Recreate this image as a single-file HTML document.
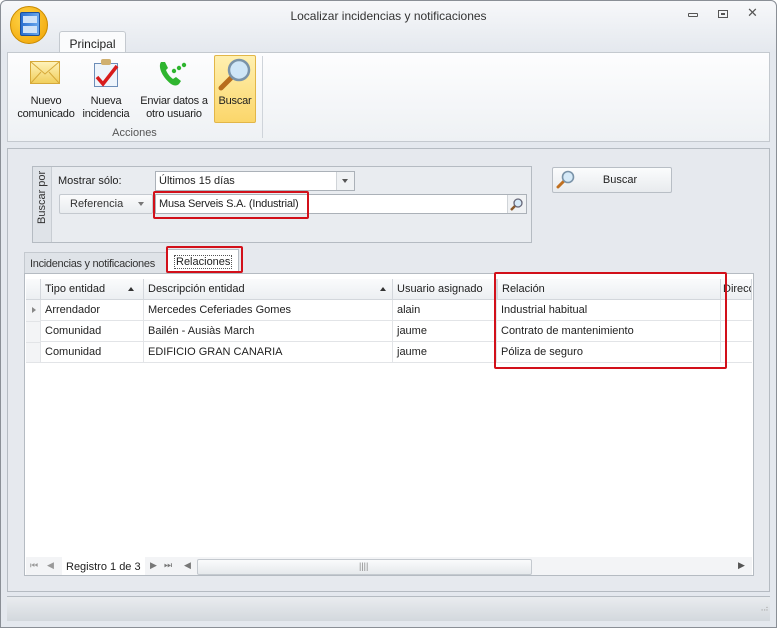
<!DOCTYPE html>
<html><head><meta charset="utf-8"><style>
*{box-sizing:border-box;margin:0;padding:0}
body{width:777px;height:628px;overflow:hidden;background:#fff;font-family:"Liberation Sans",sans-serif;font-size:11px;color:#1e1e1e;position:relative}
.a{position:absolute}
.win{left:0;top:0;width:777px;height:628px;background:#e4e8ee;border:1px solid #8a8f96;border-radius:6px 6px 0 0}
.t{white-space:nowrap}
.hdr{background:linear-gradient(#fafbfc,#eceff2);border-right:1px solid #d3d7dc;border-bottom:1px solid #d3d7dc;height:21px;top:279px;line-height:21px;padding-left:4px}
.cell{height:21px;line-height:21px;padding-left:4px;border-right:1px solid #e2e4e7;border-bottom:1px solid #e2e4e7;background:#fff}
.red{border:2px solid #d2101a;border-radius:2px}
.rl{line-height:13px;font-size:11px;letter-spacing:-0.2px;text-align:center}
</style></head><body>
<div class="a win"></div>
<div class="a" style="left:1px;top:1px;width:775px;height:52px;background:linear-gradient(#f7f8fa,#e4e8ee);border-radius:6px 6px 0 0"></div>
<div class="a t" style="left:0;width:777px;top:9px;text-align:center;font-size:12px;color:#333">Localizar incidencias y notificaciones</div>
<div class="a" style="left:10px;top:6px;width:38px;height:38px;border-radius:50%;background:radial-gradient(circle at 40% 35%,#ffd64a,#f0a000);border:1px solid #c88a00"></div>
<div class="a" style="left:20px;top:12px;width:20px;height:24px;background:linear-gradient(90deg,#2a6fd0,#6aa8ee);border:1px solid #1d4f9a;border-radius:2px"></div>
<div class="a" style="left:23px;top:16px;width:14px;height:7px;background:#cfe2f8"></div>
<div class="a" style="left:23px;top:26px;width:14px;height:7px;background:#cfe2f8"></div>
<div class="a" style="left:688px;top:13px;width:10px;height:4px;border:1px solid #555;border-radius:1px"></div>
<div class="a" style="left:718px;top:10px;width:10px;height:8px;border:1px solid #555"></div>
<div class="a" style="left:721px;top:13px;width:4px;height:2px;border:1px solid #555"></div>
<div class="a t" style="left:747px;top:5px;font-size:13px;color:#555">✕</div>
<div class="a" style="left:59px;top:31px;width:67px;height:23px;background:#fafbfc;border:1px solid #c4c9cf;border-bottom:none;border-radius:3px 3px 0 0"></div>
<div class="a t" style="left:59px;width:67px;top:37px;text-align:center;font-size:12px">Principal</div>
<div class="a" style="left:7px;top:52px;width:763px;height:90px;background:linear-gradient(#fdfdfe,#eef1f4);border:1px solid #c4c9cf"></div>
<div class="a" style="left:262px;top:56px;width:1px;height:82px;background:#cfd4da"></div>
<div class="a" style="left:30px;top:61px;width:30px;height:23px;background:linear-gradient(#fff2b8,#f1cf5e);border:1px solid #d6a93a"></div>
<svg class="a" style="left:30px;top:61px" width="30" height="23"><path d="M1 1L15 13L29 1M1 22L11 11M29 22L19 11" stroke="#d6a93a" fill="none"/></svg>
<div class="a" style="left:94px;top:63px;width:24px;height:24px;background:#eef4fb;border:1px solid #6c8db8"></div>
<div class="a" style="left:101px;top:59px;width:10px;height:6px;background:#d0b070;border-radius:2px"></div>
<svg class="a" style="left:92px;top:63px" width="30" height="26"><path d="M5 14L11 21L25 3" stroke="#d81b1b" stroke-width="3.5" fill="none"/></svg>
<svg class="a" style="left:155px;top:56px" width="34" height="34"><path d="M6 6c-3 4 0 14 10 22 3 2 6 2 8 0l2-3-5-4-3 2c-3-2-6-6-7-9l2-2-3-6z" fill="#2fb52f"/><circle cx="19" cy="15" r="2.2" fill="#2fb52f"/><circle cx="24" cy="12" r="2.2" fill="#2fb52f"/><circle cx="29" cy="9" r="2.2" fill="#2fb52f"/></svg>
<div class="a" style="left:214px;top:55px;width:42px;height:68px;background:linear-gradient(#fff0b0,#fbd66a);border:1px solid #e2b648;border-radius:2px"></div>
<svg class="a" style="left:217px;top:57px" width="36" height="34"><path d="M4 31L14 21" stroke="#b86d1c" stroke-width="5" stroke-linecap="round"/><circle cx="22" cy="13" r="10" fill="#cfe6f7" stroke="#7a93a8" stroke-width="2.5"/></svg>
<div class="a t rl" style="left:14px;width:64px;top:95px">Nuevo<br>comunicado</div>
<div class="a t rl" style="left:80px;width:52px;top:95px">Nueva<br>incidencia</div>
<div class="a t rl" style="left:136px;width:76px;top:95px">Enviar datos a<br>otro usuario</div>
<div class="a t rl" style="left:214px;width:42px;top:95px">Buscar</div>
<div class="a t" style="left:7px;width:255px;top:127px;text-align:center;color:#555;font-size:11px">Acciones</div>
<div class="a" style="left:7px;top:148px;width:763px;height:444px;border:1px solid #b5bbc2;background:#e6e9ee"></div>
<div class="a" style="left:32px;top:166px;width:500px;height:77px;border:1px solid #b5bbc2;background:#e9ecf0"></div>
<div class="a" style="left:33px;top:167px;width:19px;height:75px;background:#dfe3e8;border-right:1px solid #c8cdd3"></div>
<div class="a t" style="left:20px;top:196px;transform:rotate(-90deg);width:44px;text-align:center;color:#333">Buscar por</div>
<div class="a t" style="left:58px;top:175px;font-size:11px">Mostrar sólo:</div>
<div class="a" style="left:155px;top:171px;width:200px;height:20px;background:#fff;border:1px solid #abb1b8"></div>
<div class="a t" style="left:159px;top:175px;font-size:11px">Últimos 15 días</div>
<div class="a" style="left:336px;top:172px;width:18px;height:18px;background:#f0f2f4;border-left:1px solid #d0d4d8"></div>
<div class="a" style="left:342px;top:179px;border:3.5px solid transparent;border-top:4px solid #555"></div>
<div class="a" style="left:59px;top:194px;width:94px;height:20px;background:linear-gradient(#fbfbfc,#e9ecef);border:1px solid #c4c9cf;border-radius:2px"></div>
<div class="a t" style="left:70px;top:198px;font-size:11px;color:#333">Referencia</div>
<div class="a" style="left:138px;top:202px;border:3.5px solid transparent;border-top:4px solid #777"></div>
<div class="a" style="left:155px;top:194px;width:372px;height:20px;background:#fff;border:1px solid #abb1b8"></div>
<div class="a t" style="left:159px;top:198px;font-size:11px;letter-spacing:-0.2px">Musa Serveis S.A. (Industrial)</div>
<div class="a" style="left:507px;top:195px;width:19px;height:18px;background:#f0f2f4;border-left:1px solid #d0d4d8"></div>
<svg class="a" style="left:509px;top:197px" width="15" height="14"><path d="M2 13L6 9" stroke="#8a5a2a" stroke-width="2.5"/><circle cx="9" cy="6" r="4" fill="#d6eaf8" stroke="#667" stroke-width="1.3"/></svg>
<div class="a red" style="left:153px;top:191px;width:156px;height:28px"></div>
<div class="a" style="left:552px;top:167px;width:120px;height:26px;background:linear-gradient(#fbfcfd,#e8ebee);border:1px solid #b8bec5;border-radius:2px"></div>
<svg class="a" style="left:556px;top:170px" width="20" height="19"><path d="M2 17L8 11" stroke="#c07020" stroke-width="3" stroke-linecap="round"/><circle cx="12" cy="7" r="5.5" fill="#d6eaf8" stroke="#7a93a8" stroke-width="1.6"/></svg>
<div class="a t" style="left:552px;width:136px;top:174px;text-align:center;font-size:11px">Buscar</div>
<div class="a" style="left:24px;top:252px;width:143px;height:21px;background:#dfe3e8;border:1px solid #c4c9cf;border-bottom:none"></div>
<div class="a t" style="left:30px;top:258px;font-size:11px;letter-spacing:-0.3px;color:#333">Incidencias y notificaciones</div>
<div class="a" style="left:167px;top:249px;width:72px;height:25px;background:#fff;border:1px solid #b5bbc2;border-bottom:none"></div>
<div class="a t" style="left:175px;top:256px;font-size:11px;outline:1px dotted #555;padding:0 1px">Relaciones</div>
<div class="a red" style="left:166px;top:246px;width:77px;height:27px"></div>
<div class="a" style="left:24px;top:273px;width:730px;height:303px;background:#fff;border:1px solid #b5bbc2"></div>
<div class="a" style="left:26px;top:279px;width:726px;height:1px;background:#d3d7dc"></div>
<div class="a hdr" style="left:26px;width:15px"></div>
<div class="a hdr t" style="left:41px;width:103px">Tipo entidad</div>
<div class="a" style="left:128px;top:287px;border:3.5px solid transparent;border-bottom:4px solid #333;border-top:none"></div>
<div class="a hdr t" style="left:144px;width:249px">Descripción entidad</div>
<div class="a" style="left:380px;top:287px;border:3.5px solid transparent;border-bottom:4px solid #333;border-top:none"></div>
<div class="a hdr t" style="left:393px;width:104px">Usuario asignado</div>
<div class="a hdr t" style="left:497px;width:224px;border-left:1px solid #d3d7dc">Relación</div>
<div class="a hdr t" style="left:721px;width:31px;overflow:hidden;padding-left:2px">Direcc</div>
<div class="a" style="left:26px;top:300px;width:15px;height:63px;background:#f3f4f6;border-right:1px solid #e2e4e7"></div>
<div class="a" style="left:26px;top:321px;width:15px;height:1px;background:#e2e4e7"></div>
<div class="a" style="left:26px;top:342px;width:15px;height:1px;background:#e2e4e7"></div>
<div class="a" style="left:26px;top:362px;width:15px;height:1px;background:#e2e4e7"></div>
<div class="a" style="left:32px;top:307px;border:3px solid transparent;border-left:4px solid #888;border-right:none"></div>
<div class="a cell t" style="left:41px;top:300px;width:103px">Arrendador</div>
<div class="a cell t" style="left:144px;top:300px;width:249px">Mercedes Ceferiades Gomes</div>
<div class="a cell t" style="left:393px;top:300px;width:104px">alain</div>
<div class="a cell t" style="left:497px;top:300px;width:224px">Industrial habitual</div>
<div class="a cell" style="left:721px;top:300px;width:31px;border-right:none"></div>
<div class="a cell t" style="left:41px;top:321px;width:103px">Comunidad</div>
<div class="a cell t" style="left:144px;top:321px;width:249px">Bailén - Ausiàs March</div>
<div class="a cell t" style="left:393px;top:321px;width:104px">jaume</div>
<div class="a cell t" style="left:497px;top:321px;width:224px">Contrato de mantenimiento</div>
<div class="a cell" style="left:721px;top:321px;width:31px;border-right:none"></div>
<div class="a cell t" style="left:41px;top:342px;width:103px">Comunidad</div>
<div class="a cell t" style="left:144px;top:342px;width:249px">EDIFICIO GRAN CANARIA</div>
<div class="a cell t" style="left:393px;top:342px;width:104px">jaume</div>
<div class="a cell t" style="left:497px;top:342px;width:224px">Póliza de seguro</div>
<div class="a cell" style="left:721px;top:342px;width:31px;border-right:none"></div>
<div class="a red" style="left:494px;top:272px;width:233px;height:97px"></div>
<div class="a" style="left:26px;top:557px;width:726px;height:18px;background:#f3f4f6"></div>
<div class="a t" style="left:30px;top:560px;font-size:9px;color:#999">⏮</div>
<div class="a t" style="left:47px;top:560px;font-size:9px;color:#999">◀</div>
<div class="a" style="left:62px;top:557px;width:83px;height:18px;background:#fff"></div>
<div class="a t" style="left:66px;top:561px;font-size:11px">Registro 1 de 3</div>
<div class="a t" style="left:150px;top:560px;font-size:9px;color:#777">▶</div>
<div class="a t" style="left:164px;top:560px;font-size:9px;color:#777">⏭</div>
<div class="a t" style="left:184px;top:560px;font-size:9px;color:#777">◀</div>
<div class="a" style="left:197px;top:559px;width:335px;height:16px;background:linear-gradient(#fafbfc,#e6e9ec);border:1px solid #c4c9cf;border-radius:2px"></div>
<div class="a t" style="left:359px;top:561px;font-size:9px;color:#888">||||</div>
<div class="a t" style="left:738px;top:560px;font-size:9px;color:#555">▶</div>
<div class="a" style="left:7px;top:596px;width:763px;height:25px;background:linear-gradient(#e9ecef,#d3d8dd);border-top:1px solid #b5bbc2"></div>
<div class="a t" style="left:758px;top:604px;font-size:8px;color:#aaa;letter-spacing:-1px">⠠⠴</div>
</body></html>
